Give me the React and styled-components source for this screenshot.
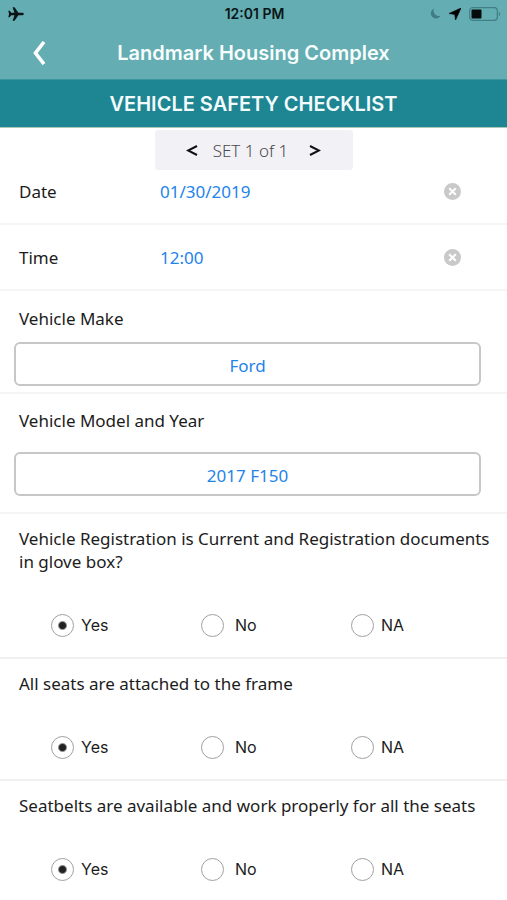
import React, { useState } from "react";
import styled, { createGlobalStyle } from "styled-components";

const GlobalStyle = createGlobalStyle`
  * { box-sizing: border-box; }
  body {
    margin: 0;
    background: #fff;
    color: #1c1c1c;
    font-family: "Noto Sans", "Open Sans", sans-serif;
    font-size: 17px;
    line-height: 23px;
  }
  button, input { font: inherit; color: inherit; }
`;

const Header = styled.header`
  background: #64adb2;
  font-family: Inter, "Liberation Sans", sans-serif;
`;

const StatusBar = styled.div`
  display: grid;
  grid-template-columns: 1fr auto 1fr;
  align-items: center;
  height: 27px;
  padding: 0 6px 0 8px;
  color: #0b1516;
  font-size: 14px;
  font-weight: 600;
`;

const StatusIcons = styled.div`
  display: flex;
  align-items: center;
  justify-content: flex-end;
  gap: 8px;
`;

const NavBar = styled.div`
  display: grid;
  grid-template-columns: 78px 1fr 78px;
  align-items: center;
  height: 52px;
  color: #fff;
`;

const BackButton = styled.button`
  display: flex;
  justify-content: center;
  padding: 0;
  border: 0;
  background: none;
  cursor: pointer;
`;

const SiteName = styled.div`
  text-align: center;
  font-size: 20px;
  font-weight: 600;
  color: #f7fdfd;
`;

const FormTitle = styled.h1`
  display: flex;
  align-items: center;
  justify-content: center;
  height: 49px;
  margin: 0;
  padding-top: 2px;
  border-bottom: 1px solid #a9c9b8;
  border-top: 1px solid #3d969e;
  background: #1e8593;
  color: #f3fbfc;
  font-size: 20px;
  font-weight: 600;
`;

const Content = styled.main`
  position: relative;
  padding-top: 31px;
`;

const SetPager = styled.nav`
  position: absolute;
  top: 2px;
  left: 50%;
  transform: translateX(-50%);
  display: flex;
  align-items: center;
  justify-content: center;
  gap: 15px;
  width: 198px;
  height: 40px;
  border-radius: 3px;
  background: #f2f1f6;
  color: #4a4a4f;
  font-weight: 300;
`;

const PagerButton = styled.button`
  display: flex;
  padding: 0;
  border: 0;
  background: none;
  color: #111;
  cursor: pointer;

  &:last-child { margin-left: 6px; }
`;

const FieldRow = styled.div`
  display: grid;
  grid-template-columns: 141px 1fr 17px;
  align-items: center;
  height: 66px;
  padding: 0 46px 0 19px;
  border-bottom: 2px solid #f5f5f5;
`;

const InlineInput = styled.input`
  width: 100%;
  padding: 0;
  border: 0;
  outline: 0;
  background: none;
  color: #2383ec;
`;

const ClearButton = styled.button`
  display: flex;
  padding: 0;
  border: 0;
  background: none;
  cursor: pointer;
`;

const TextSection = styled.section`
  padding: ${(p) => (p.$roomy ? "15px 26px 16px 14px" : "16px 26px 6px 14px")};
  border-bottom: 2px solid #f5f5f5;
`;

const FieldLabel = styled.label`
  display: block;
  padding-left: 5px;
  margin-bottom: ${(p) => (p.$roomy ? 20 : 12)}px;
`;

const BoxedInput = styled.input`
  display: block;
  width: 100%;
  height: 44px;
  padding: 2px 12px 0;
  border: 2px solid #c6c8c7;
  border-radius: 6px;
  outline: 0;
  background: #fff;
  color: #2383ec;
  text-align: center;
`;

const QuestionSet = styled.fieldset`
  margin: 0;
  padding: 13px 6px 20px 19px;
  border: 0;
  border-bottom: 2px solid #f0f0f0;
`;

const Question = styled.legend`
  float: left;
  width: 100%;
  padding: 0;
  margin-bottom: 40px;
`;

const Options = styled.div`
  clear: both;
  display: grid;
  grid-template-columns: repeat(3, 1fr);
  padding-left: 32px;
`;

const Option = styled.label`
  display: flex;
  align-items: center;
  gap: ${(p) => (p.$wide ? 11 : 7)}px;
  height: 24px;
  font-family: Inter, "Liberation Sans", sans-serif;
  font-size: 16px;
  cursor: pointer;
`;

const Radio = styled.input`
  appearance: none;
  width: 23px;
  height: 23px;
  margin: 0;
  border: 1px solid #a0a0a0;
  border-radius: 50%;
  background: #fff;

  &:checked {
    background: radial-gradient(circle, #222 0 3px, #fff 5px);
  }
`;

function ClearIcon() {
  return (
    <svg width="17" height="17" viewBox="0 0 17 17" aria-hidden="true">
      <circle cx="8.5" cy="8.5" r="8.5" fill="#c9c9c9" />
      <path d="M5.2 5.2l6.6 6.6M11.8 5.2l-6.6 6.6" stroke="#fff" strokeWidth="2" />
    </svg>
  );
}

function Chevron({ flip }) {
  return (
    <svg width="12" height="12" viewBox="0 0 12 12" fill="none" aria-hidden="true">
      <path
        d={flip ? "M1 2L10 6.500L1 11" : "M11 2L2 6.500L11 11"}
        stroke="currentColor"
        strokeWidth="2"
      />
    </svg>
  );
}

function PhoneStatus() {
  return (
    <StatusBar>
      <svg width="16" height="14" viewBox="0 0 16 14" aria-label="Airplane mode">
        <path
          d="M15.8 7c0-.8-.8-1.300-1.700-1.300h-3.700L6.500.3H4.600l1.900 5.400H3.200L1.700 3.800H.3l.8 3.200-.8 3.200h1.400l1.500-1.900h3.300l-1.900 5.400h1.900l3.900-5.400h3.700c.9 0 1.700-.5 1.700-1.300z"
          fill="currentColor"
        />
      </svg>
      <span>12:01 PM</span>
      <StatusIcons>
        <svg width="11" height="11" viewBox="0 0 11 11" aria-label="Do not disturb">
          <path d="M4 .5A5.200 5.200 0 1 0 10.600 7.800A5.500 5.500 0 0 1 4 .5z" fill="#3f7c83" />
        </svg>
        <svg width="12" height="12" viewBox="0 0 12 12" aria-label="Location">
          <path d="M12 0L0 5.500l5.700.9.900 5.600z" fill="#000" stroke="#000" strokeWidth=".6" strokeLinejoin="round" />
        </svg>
        <svg width="32" height="14" viewBox="0 0 32 14" aria-label="Battery">
          <rect x=".7" y=".7" width="27.600" height="12.600" rx="3" fill="none" stroke="#417f85" strokeWidth="1.200" />
          <rect x="2.500" y="2.500" width="10" height="9" rx="1" fill="#050a0a" />
          <path d="M29.800 4.700c1.800.8 1.800 3.800 0 4.600z" fill="#417f85" />
        </svg>
      </StatusIcons>
    </StatusBar>
  );
}

function ClearableField({ id, label, initial }) {
  const [value, setValue] = useState(initial);
  return (
    <FieldRow>
      <label htmlFor={id}>{label}</label>
      <InlineInput id={id} value={value} onChange={(e) => setValue(e.target.value)} />
      <ClearButton type="button" aria-label={`Clear ${label}`} onClick={() => setValue("")}>
        <ClearIcon />
      </ClearButton>
    </FieldRow>
  );
}

function TextField({ id, label, initial, roomy }) {
  return (
    <TextSection $roomy={roomy}>
      <FieldLabel htmlFor={id} $roomy={roomy}>{label}</FieldLabel>
      <BoxedInput id={id} defaultValue={initial} />
    </TextSection>
  );
}

function ChoiceQuestion({ name, children }) {
  return (
    <QuestionSet>
      <Question>{children}</Question>
      <Options>
        {["Yes", "No", "NA"].map((option) => (
          <Option key={option} $wide={option === "No"}>
            <Radio type="radio" name={name} value={option} defaultChecked={option === "Yes"} />
            {option}
          </Option>
        ))}
      </Options>
    </QuestionSet>
  );
}

export default function App() {
  return (
    <>
      <GlobalStyle />
      <Header>
        <PhoneStatus />
        <NavBar>
          <BackButton type="button" aria-label="Back">
            <svg width="14" height="24" viewBox="0 0 14 24" fill="none">
              <path d="M12 1L3.500 12L12 23" stroke="#fff" strokeWidth="3.600" />
            </svg>
          </BackButton>
          <SiteName>Landmark Housing Complex</SiteName>
        </NavBar>
        <FormTitle>VEHICLE SAFETY CHECKLIST</FormTitle>
      </Header>
      <Content>
        <ClearableField id="date" label="Date" initial="01/30/2019" />
        <ClearableField id="time" label="Time" initial="12:00" />
        <TextField id="make" label="Vehicle Make" initial="Ford" />
        <TextField id="model" label="Vehicle Model and Year" initial="2017 F150" roomy />
        <ChoiceQuestion name="registration">
          Vehicle Registration is Current and Registration documents in glove box?
        </ChoiceQuestion>
        <ChoiceQuestion name="seats">All seats are attached to the frame</ChoiceQuestion>
        <ChoiceQuestion name="seatbelts">
          Seatbelts are available and work properly for all the seats
        </ChoiceQuestion>
        <SetPager aria-label="Set">
          <PagerButton type="button" aria-label="Previous set"><Chevron /></PagerButton>
          <span>SET 1 of 1</span>
          <PagerButton type="button" aria-label="Next set"><Chevron flip /></PagerButton>
        </SetPager>
      </Content>
    </>
  );
}
